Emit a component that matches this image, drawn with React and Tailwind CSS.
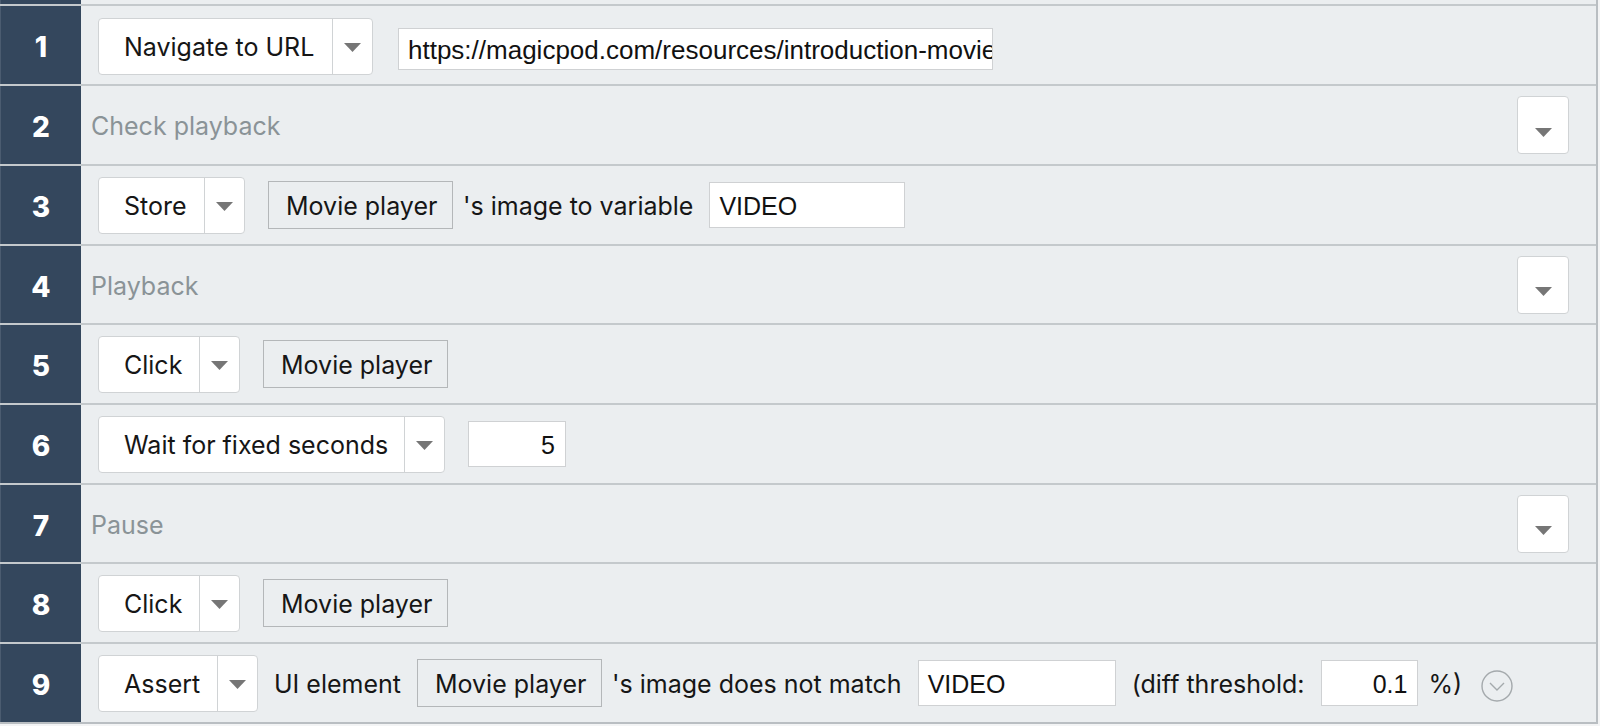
import React from "react";

const LABEL = "font-['Inter','Noto_Sans',sans-serif] text-[25px] text-[#161616]";
const FIELD = "font-['Liberation_Sans',Arial,sans-serif] text-[25px] text-[#111]";

function Tri() {
  return (
    <svg width="17" height="9" viewBox="0 0 17 9">
      <polygon points="0,0 17,0 8.5,9" fill="#767676" />
    </svg>
  );
}

function Select({ label, w }) {
  return (
    <div className={`flex h-[57px] shrink-0 items-stretch rounded-[4px] border border-[#d0d3d5] bg-white ${w}`}>
      <div className={`flex flex-1 items-center pl-[25px] pt-[4px] whitespace-nowrap ${LABEL}`}>{label}</div>
      <div className="flex w-[40px] items-center justify-center border-l border-[#d0d3d5] pt-[3px]">
        <Tri />
      </div>
    </div>
  );
}

function Element({ w, cls = "" }) {
  return (
    <div className={`flex h-[48px] shrink-0 items-center border border-[#b4b7b9] bg-[#ebeef0] pl-[17px] pt-[4px] whitespace-nowrap ${LABEL} ${w} ${cls}`}>
      Movie player
    </div>
  );
}

function Field({ value, w, h = "h-[46px]", right = false, cls = "", font = FIELD }) {
  return (
    <div
      className={`flex shrink-0 items-center overflow-hidden border border-[#cfd1d3] bg-white pt-[3px] whitespace-nowrap ${h} ${w} ${
        right ? "justify-end pr-[10px]" : "pl-[9px]"
      } ${font} ${cls}`}
    >
      {value}
    </div>
  );
}

function Text({ children, cls = "" }) {
  return <span className={`shrink-0 pt-[4px] whitespace-nowrap ${LABEL} ${cls}`}>{children}</span>;
}

function Row({ n, h, children }) {
  return (
    <div className={`flex border-t-2 border-[#c4c9cc] ${h}`}>
      <div className="flex w-[81px] shrink-0 items-center justify-center border-l border-[#4b5c70] bg-[#34475d] pt-[4px] font-['Inter',sans-serif] text-[28px] font-extrabold text-white">
        {n}
      </div>
      <div className="flex flex-1 items-center bg-[#ebeef0]">{children}</div>
    </div>
  );
}

function Comment({ text }) {
  return (
    <>
      <span className="ml-[10px] pt-[4px] font-['Inter','Noto_Sans',sans-serif] text-[25px] text-[#8a9397]">{text}</span>
      <div className="ml-auto mr-[27px] flex h-[58px] w-[52px] items-center justify-center rounded-[4px] border border-[#d0d3d5] bg-white pt-[14px]">
        <Tri />
      </div>
    </>
  );
}

export default function App() {
  return (
    <div className="h-[726px] w-[1600px] overflow-hidden bg-[#f3f4f5]">
      <div className="w-[1598px] border-r-2 border-b-2 border-[#b9bec2]">
        <div className="flex h-[4px]">
          <div className="w-[81px] border-l border-[#4b5c70] bg-[#34475d]" />
          <div className="flex-1 bg-[#ebeef0]" />
        </div>

        <Row n="1" h="h-[80px]">
          <div className="ml-[17px] flex items-center pt-[2px]">
            <Select label="Navigate to URL" w="w-[275px]" />
          </div>
          <Field
            value="https://magicpod.com/resources/introduction-movie.html"
            w="w-[595px]"
            h="h-[42px]"
            cls="ml-[25px] mt-[8px] text-[26px]"
          />
        </Row>

        <Row n="2" h="h-[80px]">
          <Comment text="Check playback" />
        </Row>

        <Row n="3" h="h-[80px]">
          <div className="ml-[17px]">
            <Select label="Store" w="w-[147px]" />
          </div>
          <Element w="w-[185px]" cls="ml-[23px]" />
          <Text cls="ml-[10px]">'s image to variable</Text>
          <Field value="VIDEO" w="w-[196px]" cls="ml-[16px]" />
        </Row>

        <Row n="4" h="h-[79px]">
          <Comment text="Playback" />
        </Row>

        <Row n="5" h="h-[80px]">
          <div className="ml-[17px]">
            <Select label="Click" w="w-[142px]" />
          </div>
          <Element w="w-[185px]" cls="ml-[23px]" />
        </Row>

        <Row n="6" h="h-[80px]">
          <div className="ml-[17px]">
            <Select label="Wait for fixed seconds" w="w-[347px]" />
          </div>
          <Field value="5" w="w-[98px]" right cls="ml-[23px]" />
        </Row>

        <Row n="7" h="h-[79px]">
          <Comment text="Pause" />
        </Row>

        <Row n="8" h="h-[80px]">
          <div className="ml-[17px]">
            <Select label="Click" w="w-[142px]" />
          </div>
          <Element w="w-[185px]" cls="ml-[23px]" />
        </Row>

        <Row n="9" h="h-[80px]">
          <div className="ml-[17px]">
            <Select label="Assert" w="w-[160px]" />
          </div>
          <Text cls="ml-[16px]">UI element</Text>
          <Element w="w-[185px]" cls="ml-[16px]" />
          <Text cls="ml-[10px]">'s image does not match</Text>
          <Field value="VIDEO" w="w-[198px]" cls="ml-[16px]" />
          <Text cls="ml-[16px]">(diff threshold:</Text>
          <Field value="0.1" w="w-[97px]" right cls="ml-[17px]" />
          <Text cls="ml-[10px]">%)</Text>
          <svg className="ml-[19px] mt-[6px] shrink-0" width="32" height="32" viewBox="0 0 32 32">
            <circle cx="16" cy="16" r="15" fill="none" stroke="#a4a9ac" strokeWidth="1.4" />
            <polyline points="9,13 16,20 23,13" fill="none" stroke="#a4a9ac" strokeWidth="1.4" />
          </svg>
        </Row>
      </div>
    </div>
  );
}
